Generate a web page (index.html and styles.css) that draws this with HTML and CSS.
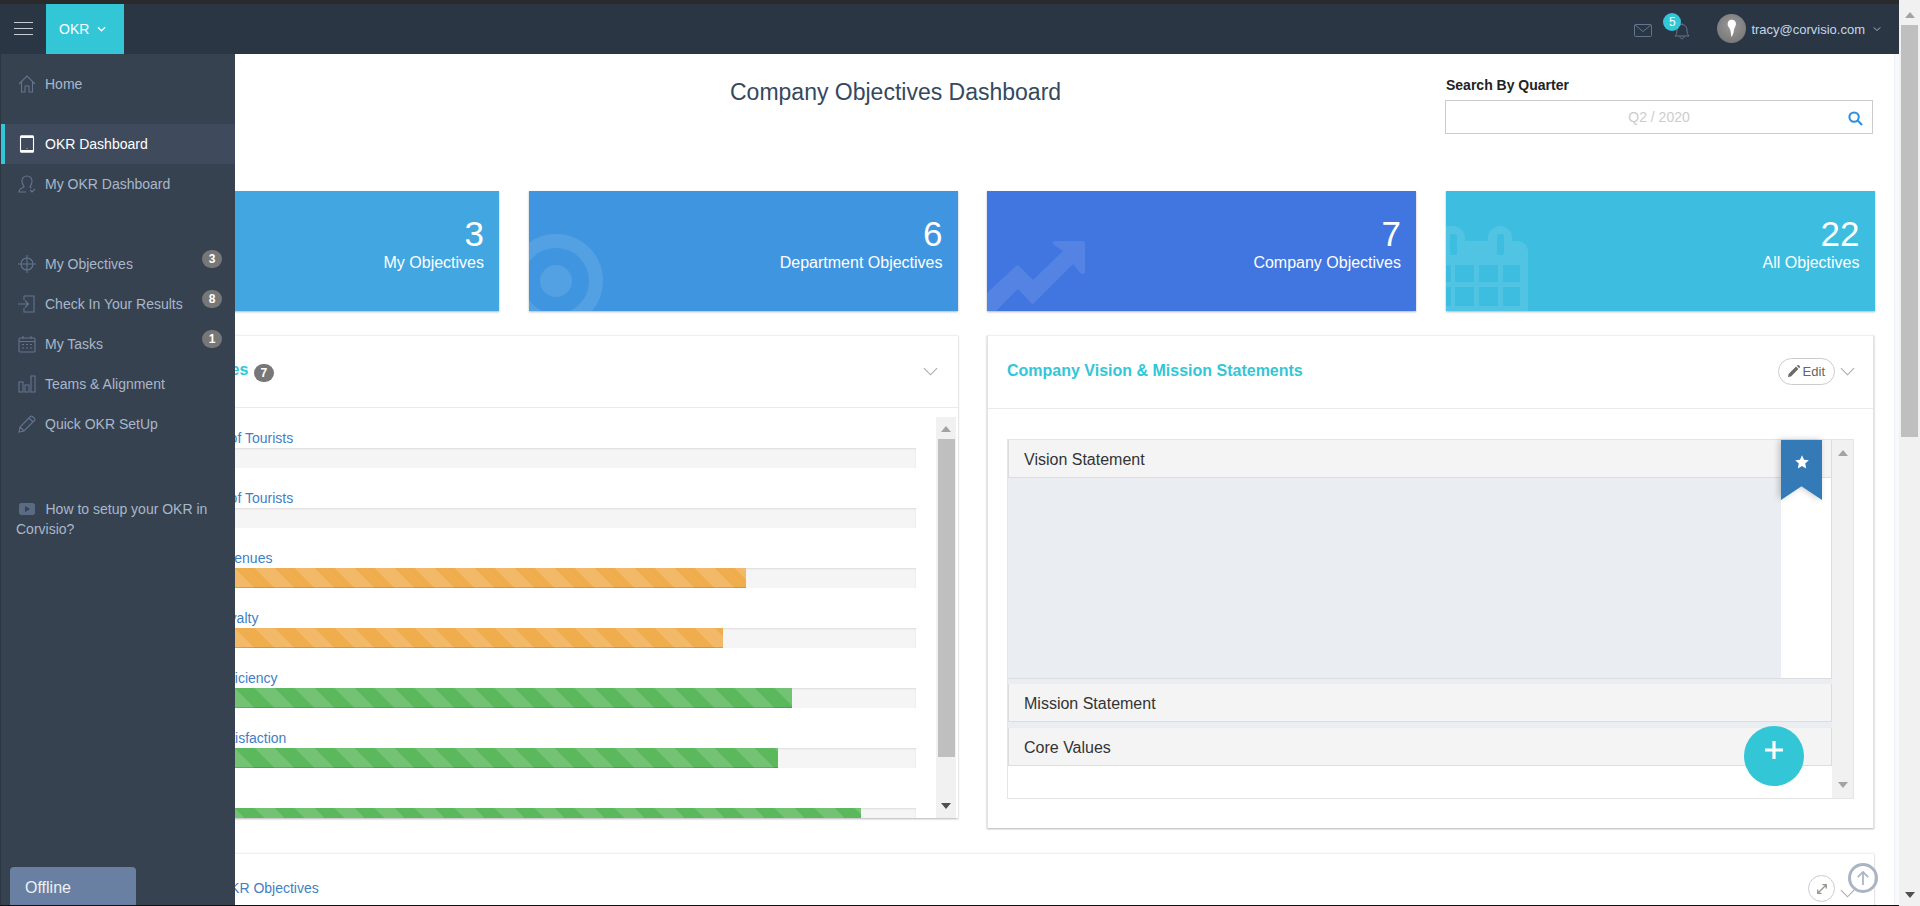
FILE: index.html
```html
<!DOCTYPE html>
<html lang="en">
<head>
<meta charset="utf-8">
<title>Company Objectives Dashboard</title>
<link rel="stylesheet" href="styles.css">
</head>
<body>
<div class="window">
  <div class="page">
    <header class="topbar">
      <button class="burger" aria-label="Menu"><span></span><span></span><span></span></button>
      <div class="module">OKR <svg class="chev" viewBox="0 0 10 6"><path d="M1 1l4 4 4-4"/></svg></div>
      <div class="top-right">
        <svg class="t-icon mail" viewBox="0 0 18 13"><rect x=".5" y=".5" width="17" height="12" rx="1"/><path d="M1 1l8 6.500L17 1"/></svg>
        <div class="bell">
          <svg class="t-icon" viewBox="0 0 16 18"><path d="M1 14c1.500-1.500 2-3 2-6 0-3 2-5.500 5-5.500s5 2.500 5 5.500c0 3 .5 4.500 2 6H1zM6 14.500c0 3 4 3 4 0M8 2.500V1"/></svg>
          <span class="bell-badge">5</span>
        </div>
        <div class="avatar"><svg viewBox="0 0 30 30"><path d="M15 6c3 0 5 2 4.500 5-.4 2-1.500 3-1.800 5-.3 2-.7 5-2.700 8-.5-3-.8-6-1.400-8-.6-2-2.600-3-2.600-5.500C11 8 12.500 6 15 6z"/></svg></div>
        <span class="user">tracy@corvisio.com</span>
        <svg class="chev user-chev" viewBox="0 0 10 6"><path d="M1 1l4 4 4-4"/></svg>
      </div>
    </header>

    <main class="content">
      <section class="heading">
        <h1>Company Objectives Dashboard</h1>
        <div class="search">
          <label>Search By Quarter</label>
          <div class="search-box">
            <span>Q2 / 2020</span>
            <svg viewBox="0 0 16 16"><circle cx="6.500" cy="6.500" r="5"/><path d="M10.500 10.500L15 15"/></svg>
          </div>
        </div>
      </section>

      <section class="stats">
        <div class="stat s1"><div class="num">3</div><div class="lbl">My Objectives</div></div>
        <div class="stat s2">
          <svg class="bg-icon" viewBox="0 0 429 120"><circle cx="27" cy="90" r="40" fill="none" stroke="#fff" stroke-width="14"/><circle cx="27" cy="90" r="16" fill="#fff"/></svg>
          <div class="num">6</div><div class="lbl">Department Objectives</div>
        </div>
        <div class="stat s3">
          <svg class="bg-icon" viewBox="0 0 429 120"><path fill="#fff" d="M67 50h29a2 2 0 0 1 2 2v29a2 2 0 0 1-2 2c-1 0-2-.500-3-1.500L86 73 47 112a2 2 0 0 1-3 0L31 98 9 120H0v-18l29-27a2 2 0 0 1 3 0l14 14 30-29-9-6c-2-2-1-4 0-4z"/></svg>
          <div class="num">7</div><div class="lbl">Company Objectives</div>
        </div>
        <div class="stat s4">
          <svg class="bg-icon" viewBox="0 0 429 120"><path fill="#fff" fill-rule="evenodd" d="M0 35h7a12 12 0 0 1 12 12v3h23v-3a12 12 0 0 1 24 0v3h6a10 10 0 0 1 10 10v60H0zM4 43v21h5a2 2 0 0 0 2-2V45a2 2 0 0 0-2-2zM53 43a2 2 0 0 0-2 2v17a2 2 0 0 0 2 2h3a2 2 0 0 0 2-2V45a2 2 0 0 0-2-2zM0 74v17h5V74zM9 74v17h19V74zM33 74v17h19V74zM57 74v17h17V74zM0 96v19h5V96zM9 96v19h19V96zM33 96v19h19V96zM57 96v19h17V96z"/></svg>
          <div class="num">22</div><div class="lbl">All Objectives</div>
        </div>
      </section>

      <section class="panels">
        <article class="panel panel-left">
          <div class="panel-head short">
            <h2>Company Objectives <span class="count">7</span></h2>
            <svg class="fold" viewBox="0 0 16 9"><path d="M1 1l7 7 7-7"/></svg>
          </div>
          <div class="list-wrap">
            <ul class="bars">
              <li><a>Increase the Number of Tourists</a><div class="track"></div></li>
              <li><a>Increase the Number of Tourists</a><div class="track"></div></li>
              <li><a>Increase Property Revenues</a><div class="track"><div class="fill warn" style="width:79.3%"></div></div></li>
              <li><a>Improve Customer Loyalty</a><div class="track"><div class="fill warn" style="width:76.5%"></div></div></li>
              <li><a>Increase Operating Efficiency</a><div class="track"><div class="fill good" style="width:84.9%"></div></div></li>
              <li><a>Improve Customer Satisfaction</a><div class="track"><div class="fill good" style="width:83.2%"></div></div></li>
              <li><a>Grow Sales</a><div class="track"><div class="fill good" style="width:93.3%"></div></div></li>
            </ul>
            <div class="vbar list-bar"><i class="up"></i><b class="thumb"></b><i class="down"></i></div>
          </div>
        </article>

        <article class="panel panel-right">
          <div class="panel-head">
            <h2>Company Vision &amp; Mission Statements</h2>
            <div class="tools">
              <span class="edit"><svg viewBox="0 0 12 12"><path d="M0 12l.6-3L8 1.600l2.400 2.400L3 11.400zM8.800.800l.8-.6c.4-.3.800-.3 1.200 0l1 1c.3.400.3.800 0 1.200l-.6.8z"/></svg>Edit</span>
              <svg class="fold" viewBox="0 0 16 9"><path d="M1 1l7 7 7-7"/></svg>
            </div>
          </div>
          <div class="panel-body">
            <div class="statements">
              <div class="accordion">
                <div class="acc-item">
                  <div class="acc-head">Vision Statement</div>
                  <div class="acc-body"><div class="acc-fill"></div><div class="acc-side"></div></div>
                </div>
                <div class="acc-item"><div class="acc-head">Mission Statement</div></div>
                <div class="acc-item"><div class="acc-head">Core Values</div></div>
                <div class="ribbon"><div class="ribbon-shape"><svg viewBox="0 0 24 24"><path d="M12 2l3 6.700 7.200.8-5.400 4.900 1.500 7.200L12 17.900l-6.300 3.700 1.500-7.200L1.800 9.500 9 8.700z"/></svg></div></div>
              </div>
              <div class="vbar inner-bar"><i class="up"></i><i class="down"></i></div>
            </div>
          </div>
        </article>
      </section>

      <article class="panel panel-bottom">
        <a class="bottom-title">Department Owners OKR Objectives</a>
        <div class="tools">
          <span class="expand"><svg viewBox="0 0 14 14"><path d="M2 12l10-10M7.500 2H12v4.500M2 7.500V12h4.500"/></svg></span>
          <svg class="fold" viewBox="0 0 16 9"><path d="M1 1l7 7 7-7"/></svg>
        </div>
      </article>
    </main>

    <aside class="sidebar">
      <nav class="nav">
        <a class="item"><svg viewBox="0 0 18 18"><path d="M1 9l8-8 8 8M3.500 7v10H7v-6h4v6h3.500V7"/></svg>Home</a>
        <a class="item active gap-s"><svg viewBox="0 0 18 18"><rect x="2.500" y="1" width="13" height="16" rx="1"/><path class="thick" d="M2.500 1.800h13M2.500 16.200h13"/><path d="M9 13.500v.5"/></svg>OKR Dashboard</a>
        <a class="item"><svg viewBox="0 0 18 18"><path d="M8 17H1c0-3 3-4 5-5 .5-1-2-2-2-6 0-3 2-5 5-5s5 2 5 5c0 4-2 5-2 6l1.500 1M12 15l2 2 3-3"/></svg>My OKR Dashboard</a>
        <a class="item gap-l"><svg viewBox="0 0 18 18"><circle cx="9" cy="9" r="6"/><path d="M9 0v18M0 9h18"/></svg>My Objectives<span class="pill">3</span></a>
        <a class="item"><svg viewBox="0 0 18 18"><path d="M6 1h10v16H6v-4M6 5V1M0 9h10M7 5.500L10.500 9 7 12.500"/></svg>Check In Your Results<span class="pill">8</span></a>
        <a class="item"><svg viewBox="0 0 18 18"><rect x="1" y="3" width="16" height="14" rx="1"/><path d="M5 1v3M13 1v3M1 6.500h16M4 9.500h2M8 9.500h2M12 9.500h2M4 13h2M8 13h2M12 13h2"/></svg>My Tasks<span class="pill">1</span></a>
        <a class="item"><svg viewBox="0 0 18 18"><rect x="1" y="7" width="4" height="10"/><rect x="7" y="10" width="4" height="7"/><rect x="13" y="1" width="4" height="16"/></svg>Teams &amp; Alignment</a>
        <a class="item"><svg viewBox="0 0 18 18"><path d="M1 17l1-5L12.500 1.500a1.500 1.500 0 0 1 2 0l2 2a1.500 1.500 0 0 1 0 2L6 16zM2 12l4 4M11 3l4 4"/></svg>Quick OKR SetUp</a>
      </nav>
      <a class="howto"><svg viewBox="0 0 16 12"><rect width="16" height="12" rx="2.500"/><path class="play" d="M6 3l5 3-5 3z"/></svg>How to setup your OKR in Corvisio?</a>
      <div class="offline">Offline</div>
    </aside>

    <button class="fab" aria-label="Add"><svg viewBox="0 0 18 18"><path d="M9 0v18M0 9h18"/></svg></button>
    <button class="to-top" aria-label="Back to top"><svg viewBox="0 0 16 18"><path d="M8 17V2M2 8l6-6 6 6"/></svg></button>
  </div>
  <div class="vbar page-bar"><i class="up"></i><b class="thumb"></b><i class="down"></i></div>
</div>
</body>
</html>
```

FILE: styles.css
```css
* { box-sizing: border-box; }
html, body { margin: 0; height: 906px; overflow: hidden; }
body { font-family: "Liberation Sans", Arial, sans-serif; background: #fff; color: #333; }
a { text-decoration: none; }
h1, h2, ul { margin: 0; padding: 0; }

.window { display: flex; height: 906px; }
.page { position: relative; width: 1899px; height: 906px; overflow: hidden; background: #fff; border-top: 4px solid #2a2a2c; border-bottom: 1px solid #111; }
.page::after { content: ""; position: absolute; right: 0; top: 50px; bottom: 0; width: 4px; background: #f7f9fc; border-left: 1px solid #eef0f4; }

/* top bar */
.topbar { display: flex; align-items: stretch; height: 50px; background: #2b3644; }
.burger { display: flex; flex-direction: column; justify-content: space-between; width: 19px; height: 13px; margin: 18px 13px 0 14px; padding: 0; border: 0; background: none; }
.burger span { display: block; height: 1px; background: #c5ccd6; }
.module { display: flex; align-items: center; gap: 8px; width: 78px; padding-left: 13px; background: #33c6d6; color: #fff; font-size: 14px; }
.chev { width: 9px; height: 6px; fill: none; stroke: #fff; stroke-width: 1.400; }
.top-right { display: flex; align-items: center; margin-left: auto; height: 100%; padding-right: 18px; }
.t-icon { display: block; fill: none; stroke: #63758e; stroke-width: 1; }
.mail { width: 18px; height: 13px; margin-top: 2px; margin-right: 22px; }
.bell { position: relative; width: 16px; height: 18px; margin-top: 3px; margin-right: 27px; }
.bell .t-icon { width: 16px; height: 18px; }
.bell-badge { position: absolute; left: -11px; top: -9px; width: 18px; height: 18px; border-radius: 50%; background: #33c6d6; color: #fff; font-size: 12px; line-height: 18px; text-align: center; }
.avatar { width: 29px; height: 29px; margin-right: 5px; margin-top: -1px; border-radius: 50%; background: radial-gradient(circle at 50% 40%, #999, #6f6f6f); overflow: hidden; }
.avatar svg { display: block; width: 29px; height: 29px; fill: #fff; }
.user { color: #c3d6ea; font-size: 13px; }
.user-chev { margin-left: 8px; stroke: #aebccd; stroke-width: 1.200; width: 8px; }

/* content */
.content { padding: 0 25px 0 70px; }
.heading { display: flex; height: 137px; }
.heading h1 { flex: 1; padding: 25px 0 0 660px; font-size: 23px; font-weight: 400; line-height: 26px; color: #34495e; white-space: nowrap; }
.search { width: 429px; padding-top: 24px; }
.search label { display: block; margin-left: 1px; font-size: 14px; font-weight: 700; line-height: 15px; color: #222; }
.search-box { position: relative; display: flex; align-items: center; justify-content: center; width: 428px; height: 34px; margin-top: 7px; border: 1px solid #ccc; color: #ccc; font-size: 14px; }
.search-box svg { position: absolute; right: 9px; top: 10px; width: 15px; height: 15px; fill: none; stroke: #2f8fdc; stroke-width: 2.200; }

.stats { display: grid; grid-template-columns: 429px 429px 429px 429px; column-gap: 29.5px; }
.stat { position: relative; height: 120px; padding: 25px 15px 0 0; overflow: hidden; color: #fff; text-align: right; box-shadow: 0 1px 2px rgba(0, 0, 0, .3); }
.s1 { background: #42a6e1; }
.s2 { background: #3f95df; }
.s3 { background: #4175e0; }
.s4 { background: #3dbde0; }
.bg-icon { position: absolute; left: 0; top: 0; width: 429px; height: 120px; opacity: .1; }
.num { position: relative; font-size: 35px; line-height: 36px; }
.lbl { position: relative; margin-top: 1px; font-size: 16px; line-height: 20px; }

/* panels */
.panels { display: grid; grid-template-columns: 888px 887px; column-gap: 29px; align-items: start; margin-top: 24px; height: 493px; }
.panel { background: #fff; border-top: 1px solid #f0f0f0; box-shadow: 0 1px 2px rgba(0, 0, 0, .3); }
.panel-left { height: 483px; overflow: hidden; }
.panel-right { height: 493px; border-left: 1px solid #e2e2e2; border-right: 1px solid #e2e2e2; }
.panel-head { display: flex; align-items: center; justify-content: space-between; height: 73px; padding: 0 18px 2px 19px; border-bottom: 1px solid #eaeaea; }
.panel-head.short { height: 72px; padding: 0 20px 0 20px; }
.panel-head h2 { font-size: 16px; font-weight: 700; color: #33c6d6; white-space: nowrap; }
.count { display: inline-block; width: 20px; height: 18px; margin-left: 1px; border-radius: 9px; background: #777; color: #fff; font-size: 12px; line-height: 18px; text-align: center; vertical-align: -2px; }
.fold { display: block; width: 15px; height: 9px; fill: none; stroke: #aaa; stroke-width: 1.200; }
.tools { display: flex; align-items: center; gap: 5px; }

.list-wrap { display: flex; height: 410px; padding-top: 9px; }
.bars { flex: 1; padding: 11px 20px 0 25px; list-style: none; }
.bars li { height: 60px; }
.bars a { display: block; height: 20px; font-size: 14px; line-height: 20px; color: #3f80c4; white-space: nowrap; }
.track { height: 20px; background: #f5f5f5; box-shadow: inset 0 1px 2px rgba(0, 0, 0, .1); }
.fill { height: 20px; box-shadow: inset 0 -1px 0 rgba(0, 0, 0, .15); background-size: 40px 40px; background-image: linear-gradient(45deg, rgba(255, 255, 255, .15) 25%, transparent 25%, transparent 50%, rgba(255, 255, 255, .15) 50%, rgba(255, 255, 255, .15) 75%, transparent 75%); }
.warn { background-color: #f0ad4e; }
.good { background-color: #5cb85c; }

.vbar { position: relative; flex: none; background: #f1f1f1; }
.vbar i { position: absolute; left: 50%; margin-left: -5px; width: 0; height: 0; border-left: 5px solid transparent; border-right: 5px solid transparent; }
.vbar .up { border-bottom: 6px solid #a3a3a3; }
.vbar .down { border-top: 6px solid #505050; }
.thumb { position: absolute; background: #bfbfbf; }
.list-bar { width: 20px; margin-right: 2px; height: 401px; }
.list-bar .up { top: 9px; }
.list-bar .down { top: 386px; }
.list-bar .thumb { left: 2px; right: 1px; top: 22px; height: 318px; }

.panel-body { padding: 30px 19px 0; }
.statements { display: flex; height: 360px; border: 1px solid #e5e5e5; }
.accordion { position: relative; flex: 1; }
.acc-item { border-bottom: 5px solid #eaedf1; }
.acc-item:nth-child(2) { border-bottom-width: 6px; }
.acc-item:nth-child(3) { border-bottom: 0; }
.acc-head { height: 38px; padding: 1px 0 0 15px; border: 1px solid #ddd; border-top: 0; background: #f4f4f4; font-size: 16px; line-height: 38px; color: #333; }
.acc-body { display: flex; height: 201px; border-right: 1px solid #ddd; border-bottom: 1px solid #ddd; }
.acc-fill { flex: 1; background: #eaedf1; }
.acc-side { width: 50px; background: #fff; }
.ribbon { position: absolute; right: 10px; top: 0; width: 41px; height: 60px; filter: drop-shadow(-2px 0 3px rgba(0, 0, 0, .22)); }
.ribbon-shape { height: 60px; background: #337ab7; clip-path: polygon(0 0, 100% 0, 100% 100%, 50% 77%, 0 100%); }
.ribbon svg { display: block; width: 16px; height: 16px; margin: 0 auto; transform: translateY(14px); fill: #fff; }
.inner-bar { width: 21px; }
.inner-bar .up { top: 10px; border-bottom-color: #a3a3a3; }
.inner-bar .down { top: 342px; border-top-color: #a3a3a3; }

.edit { display: flex; align-items: center; gap: 3px; height: 27px; padding: 0 9px; border: 1px solid #ccc; border-radius: 14px; color: #666; font-size: 13px; }
.edit svg { width: 12px; height: 12px; fill: #6b6b6b; }

.panel-bottom { display: flex; justify-content: space-between; height: 80px; margin-top: 25px; padding: 24px 19px 0 20px; }
.bottom-title { font-size: 14px; line-height: 20px; color: #3f80c4; white-space: nowrap; }
.panel-bottom .tools { align-items: flex-start; }
.panel-bottom .fold { margin-top: 11px; }
.expand { display: flex; align-items: center; justify-content: center; width: 27px; height: 27px; margin-top: -3px; border: 1px solid #ccc; border-radius: 50%; }
.expand svg { width: 12px; height: 12px; fill: none; stroke: #9a948c; stroke-width: 1.500; }

/* sidebar overlay */
.sidebar { position: absolute; left: 0; top: 50px; bottom: 0; display: flex; flex-direction: column; width: 235px; padding-top: 10px; background: #374250; border-left: 1px solid #2c3541; }
.nav { display: flex; flex-direction: column; }
.item { position: relative; display: flex; align-items: center; gap: 9px; height: 40px; padding-left: 17px; color: #a8b7cb; font-size: 14px; }
.item svg { flex: none; width: 18px; height: 18px; fill: none; stroke: #62748e; stroke-width: 1.100; }
.gap-s { margin-top: 20px; }
.gap-l { margin-top: 40px; }
.active { padding-left: 13px; border-left: 4px solid #33c6d6; background: #3f4b5c; color: #fff; }
.active svg { stroke: #fff; }
.active .thick { stroke-width: 2.500; }
.pill { position: absolute; left: 201px; top: 6px; width: 20px; height: 18px; border-radius: 9px; background: #777; color: #fff; font-size: 12px; font-weight: 700; line-height: 18px; text-align: center; }
.howto { display: block; margin-top: 55px; padding: 0 25px 0 15px; color: #a8b7cb; font-size: 14px; line-height: 20px; }
.howto svg { display: inline-block; width: 16px; height: 12px; margin: 0 10.500px 0 3px; fill: #5a6b83; vertical-align: -1px; }
.howto .play { fill: #374250; }
.offline { width: 126px; height: 38px; margin: auto 0 0 9px; padding-left: 15px; border-radius: 4px 4px 0 0; background: #6a80a2; color: #eef1f5; font-size: 16px; line-height: 41px; }

/* floating buttons */
.fab { position: absolute; left: 1744px; top: 722px; width: 60px; height: 60px; padding: 0 0 12px; border: 0; border-radius: 50%; background: #33c6d6; }
.fab svg { display: block; width: 18px; height: 18px; margin: 0 auto; fill: none; stroke: #fff; stroke-width: 3.200; }
.to-top { position: absolute; left: 1848px; top: 859px; width: 30px; height: 30px; padding: 0; border: 3px solid #a9b4c4; border-radius: 50%; background: transparent; }
.to-top svg { display: block; width: 14px; height: 16px; margin: 0 auto; fill: none; stroke: #a9b4c4; stroke-width: 2; }

/* window scrollbar */
.page-bar { width: 21px; height: 906px; }
.page-bar .up { top: 12px; }
.page-bar .down { top: 892px; }
.page-bar .thumb { left: 2px; right: 2px; top: 25px; height: 412px; }
```
